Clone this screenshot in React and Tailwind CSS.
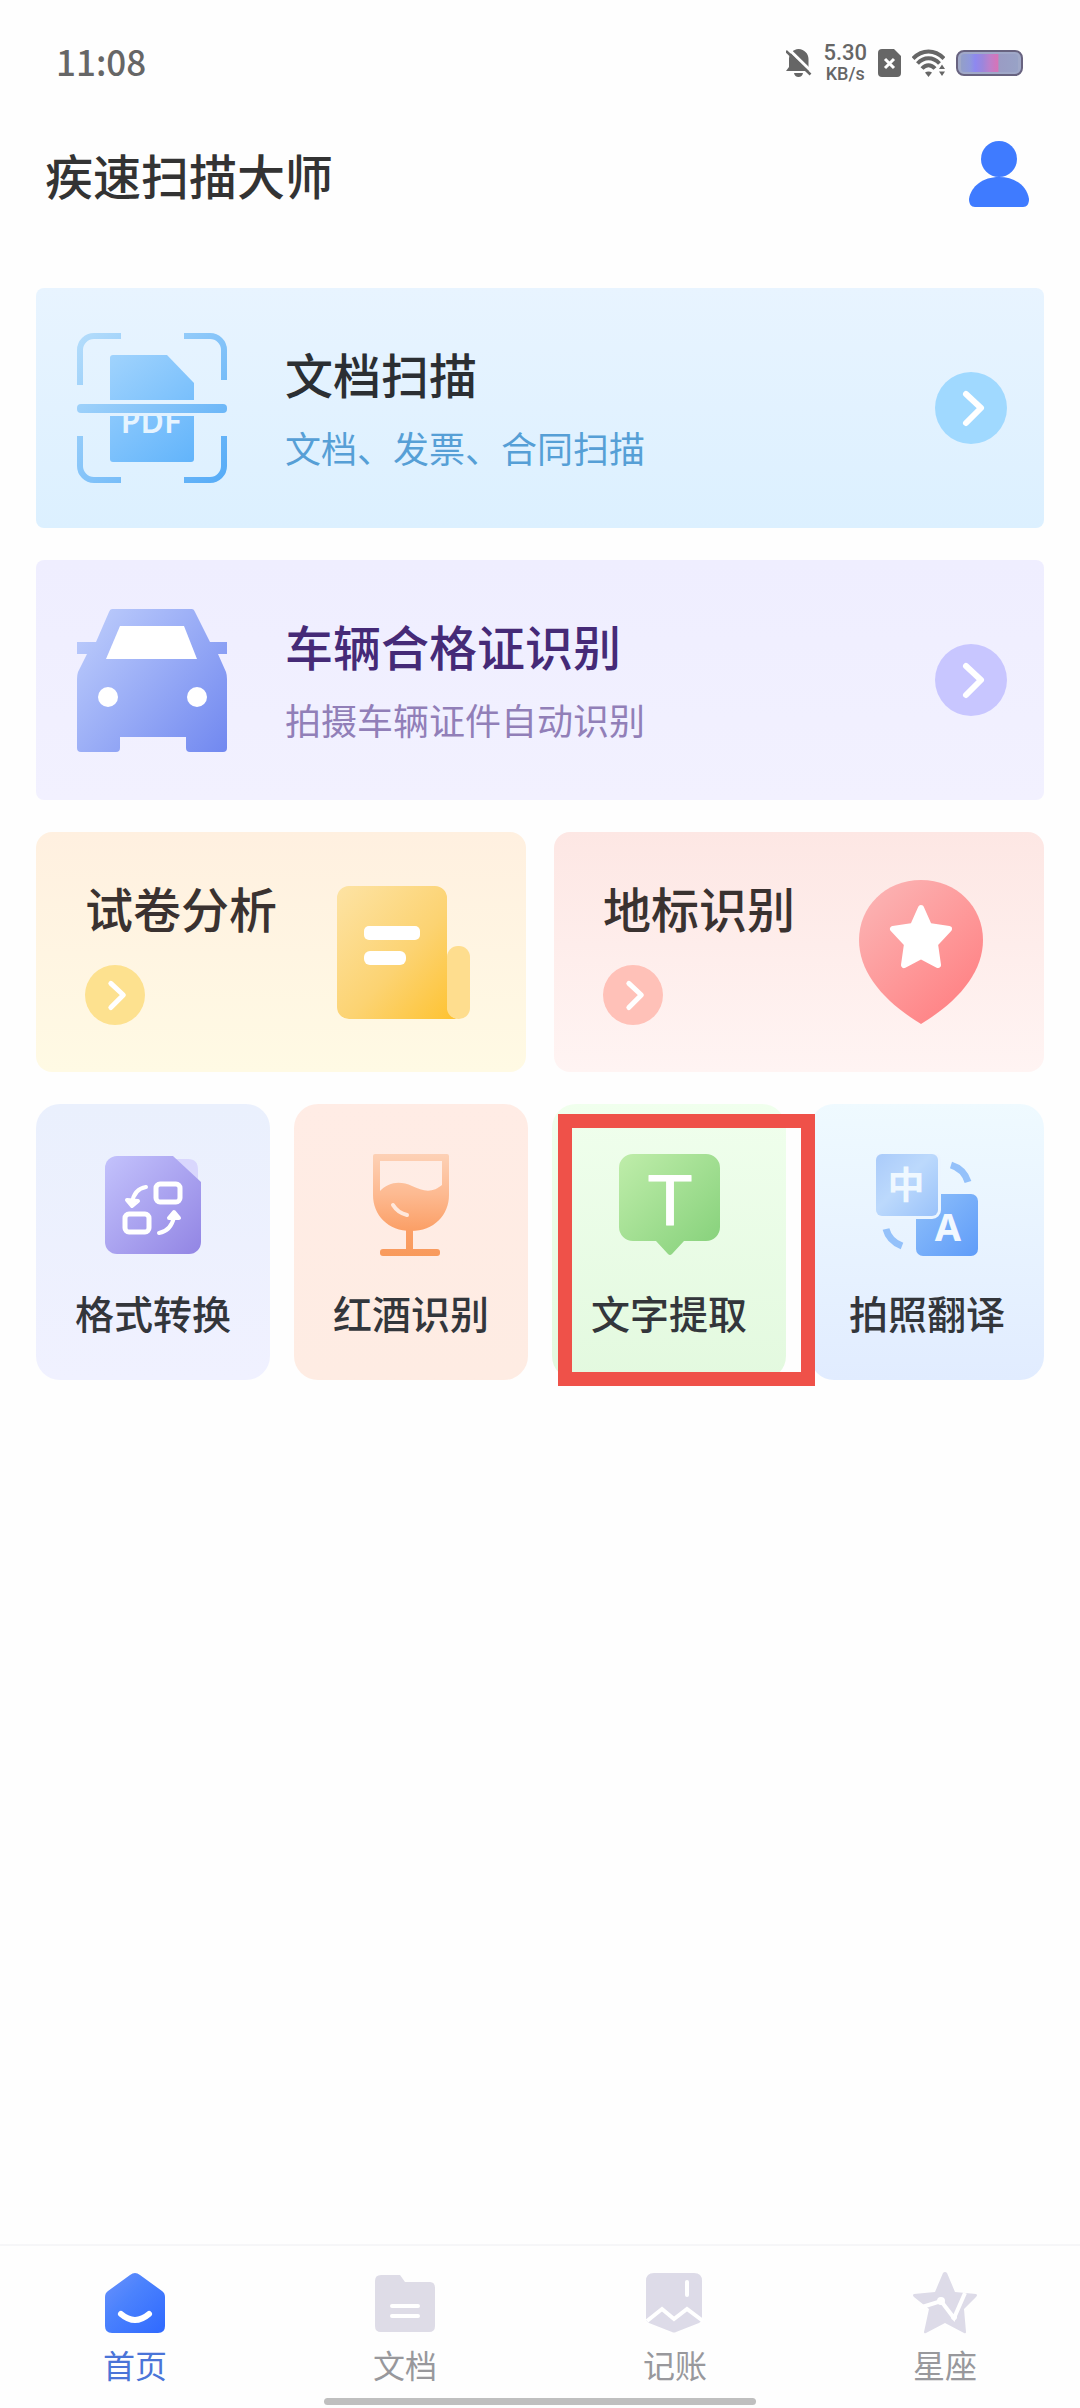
import { useState } from 'react';

const BellOffIcon = () => (
    <svg className="w-[26px] h-[28px]" viewBox="0 0 26 28" aria-hidden="true">
        <path d="M12.500 0c6 .5 10 4.500 10 10v8l2.500 4H0l3-4V9.500C3.500 4 7 .5 12.500 0Z" fill="#666" />
        <path d="M8 24h9c-.5 2.500-2 4-4.500 4S8.500 26.500 8 24Z" fill="#666" />
        <path d="M2 -.5 26 23" stroke="#fefefe" strokeWidth="3" />
        <path d="M0 2 24.500 25.500" stroke="#666" strokeWidth="2.500" />
    </svg>
);

const SimIcon = () => (
    <svg className="w-[23px] h-[28px]" viewBox="0 0 23 28" aria-hidden="true">
        <path d="M4 0h12l7 7v17a4 4 0 0 1-4 4H4a4 4 0 0 1-4-4V4a4 4 0 0 1 4-4Z" fill="#666" />
        <path d="m7 10 9 9m0-9-9 9" stroke="#fff" strokeWidth="3" />
    </svg>
);

const WifiIcon = () => (
    <svg className="w-[33px] h-[28px]" viewBox="0 0 33 28" fill="none" aria-hidden="true">
        <path d="M1 9.500C10 0 23 0 32 9.500" stroke="#666" strokeWidth="4" />
        <path d="M5.500 14.500c6.500-7 15.500-7 22 0" stroke="#666" strokeWidth="4" />
        <path d="M10 19.500c4-4.500 9-4.500 13 0" stroke="#666" strokeWidth="4" />
        <path d="M13 23.500c2-1.500 5-1.500 7 0L16.500 28Z" fill="#666" />
        <path d="M24.500 20 30 12l5.500 8v3L30 31l-5.500-8Z" fill="#fefefe" />
        <path d="m27 20 3-4.500 3 4.500ZM27 22.500l3 4.500 3-4.500Z" fill="#666" />
    </svg>
);

const BatteryIcon = () => (
    <svg className="w-[67px] h-[26px]" viewBox="0 0 67 26" aria-hidden="true">
        <defs>
            <linearGradient id="battery">
                <stop offset="0" stopColor="#939fc8" />
                <stop offset=".16" stopColor="#8f98dc" />
                <stop offset=".25" stopColor="#8e88f0" />
                <stop offset=".38" stopColor="#9c86dc" />
                <stop offset=".5" stopColor="#bb80cc" />
                <stop offset=".64" stopColor="#d674b8" />
                <stop offset=".67" stopColor="#9a9cc4" />
                <stop offset="1" stopColor="#98a2c6" />
            </linearGradient>
        </defs>
        <rect x="1" y="1" width="65" height="24" rx="7" fill="#a0a8c8" stroke="#686380" strokeWidth="2" />
        <rect x="5" y="4" width="57" height="18" rx="3" fill="url(#battery)" />
    </svg>
);

const UserIcon = () => (
    <svg className="w-[60px] h-[66px]" viewBox="0 0 60 66" fill="#3f7bff" aria-hidden="true">
        <circle cx="30" cy="18" r="18" />
        <path d="M30 36c16 0 28 9 30 22 0 5-2 8-6 8H6c-4 0-6-3-6-8C2 45 14 36 30 36Z" />
    </svg>
);

const PdfScanIcon = () => (
    <svg className="w-[150px] h-[150px]" viewBox="0 0 150 150" fill="none" aria-hidden="true">
        <defs>
            <linearGradient id="scan-frame" gradientUnits="userSpaceOnUse" x1="0" y1="0" x2="150" y2="150">
                <stop offset="0" stopColor="#b5ddfb" />
                <stop offset="1" stopColor="#55abf7" />
            </linearGradient>
            <linearGradient id="scan-doc" gradientUnits="userSpaceOnUse" x1="33" y1="22" x2="117" y2="129">
                <stop offset="0" stopColor="#a0d3fd" />
                <stop offset="1" stopColor="#62b4fb" />
            </linearGradient>
            <clipPath id="scan-lower">
                <rect x="33" y="83" width="84" height="46" />
            </clipPath>
        </defs>
        <path
            d="M44 3H17A14 14 0 0 0 3 17v35M107 3h26a14 14 0 0 1 14 14v30M3 103v30a14 14 0 0 0 14 14h27M147 103v30a14 14 0 0 1-14 14h-26"
            stroke="url(#scan-frame)"
            strokeWidth="6"
        />
        <path d="M36 22h54l27 28v17H33V25a3 3 0 0 1 3-3Z" fill="url(#scan-doc)" />
        <path d="M33 83h84v43a3 3 0 0 1-3 3H36a3 3 0 0 1-3-3Z" fill="url(#scan-doc)" />
        <text
            x="74"
            y="100"
            textAnchor="middle"
            fontSize="32"
            fontWeight="600"
            fill="#e6f4ff"
            clipPath="url(#scan-lower)"
            className="font-['Noto_Sans',sans-serif]"
        >
            PDF
        </text>
        <rect y="71" width="150" height="9" rx="4" fill="url(#scan-frame)" />
    </svg>
);

const CarIcon = () => (
    <svg className="w-[150px] h-[143px]" viewBox="0 0 150 143" aria-hidden="true">
        <defs>
            <linearGradient id="car" x1="0" y1=".2" x2="1" y2="1">
                <stop offset="0" stopColor="#b9c9fb" />
                <stop offset="1" stopColor="#7188f0" />
            </linearGradient>
        </defs>
        <path
            d="M35 0h80q2 0 3 3l15 30h17v12h-9l8 18q1 3 1 7v69q0 4-4 4h-33q-4 0-4-4v-11H43v11q0 4-4 4H4q-4 0-4-4V70q0-4 1-7l9-18H0V33h19L32 3q1-3 3-3Z"
            fill="url(#car)"
        />
        <path d="M43 17h64l13 33H29Z" fill="#fff" />
        <circle cx="31" cy="88" r="10" fill="#fff" />
        <circle cx="120" cy="88" r="10" fill="#fff" />
    </svg>
);

const PaperIcon = () => (
    <svg className="w-[133px] h-[133px]" viewBox="0 0 133 133" aria-hidden="true">
        <defs>
            <linearGradient id="paper" x1="0" y1="0" x2="1" y2="1">
                <stop offset="0" stopColor="#fde3a4" />
                <stop offset=".55" stopColor="#fcd372" />
                <stop offset="1" stopColor="#fec22f" />
            </linearGradient>
        </defs>
        <path d="M12 0h86a12 12 0 0 1 12 12v109q2 10 10 12H12a12 12 0 0 1-12-12V12A12 12 0 0 1 12 0Z" fill="url(#paper)" />
        <rect x="110" y="60" width="23" height="73" rx="11" fill="#fedd8e" />
        <rect x="27" y="40" width="56" height="14" rx="5" fill="#fff" />
        <rect x="27" y="65" width="42" height="14" rx="6" fill="#fff" />
    </svg>
);

const PinIcon = () => (
    <svg className="w-[124px] h-[144px]" viewBox="0 0 124 144" aria-hidden="true">
        <defs>
            <linearGradient id="pin" x1="0" y1="0" x2=".8" y2="1">
                <stop offset="0" stopColor="#fbb8b8" />
                <stop offset=".6" stopColor="#fe9697" />
                <stop offset="1" stopColor="#ff7f82" />
            </linearGradient>
        </defs>
        <path d="M62 0c36 0 62 27 62 60 0 32-24 61-62 84C24 121 0 92 0 60 0 27 26 0 62 0Z" fill="url(#pin)" />
        <path
            d="m62 28 8 18 20 3-14 15 3 21-17-9-17 9 3-21-14-15 20-3Z"
            fill="#fff"
            stroke="#fff"
            strokeWidth="6"
            strokeLinejoin="round"
        />
    </svg>
);

const ConvertIcon = () => (
    <svg className="w-[96px] h-[98px]" viewBox="0 0 96 98" fill="none" aria-hidden="true">
        <defs>
            <linearGradient id="convert" x1="0" y1="0" x2="1" y2="1">
                <stop offset="0" stopColor="#c3c2fc" />
                <stop offset="1" stopColor="#9285e4" />
            </linearGradient>
        </defs>
        <path d="M68 3h15q10 0 10 11v13H78Z" fill="#d9d7fd" />
        <path d="M12 0h56l28 26v60a12 12 0 0 1-12 12H12A12 12 0 0 1 0 86V12A12 12 0 0 1 12 0Z" fill="url(#convert)" />
        <g stroke="#fff" strokeWidth="5" strokeLinecap="round" strokeLinejoin="round">
            <rect x="51" y="28" width="24" height="18" rx="4" />
            <rect x="20" y="58" width="24" height="18" rx="4" />
            <path d="M41 31q-12 2-14 16M54 77q12-2 15-16" strokeWidth="4" />
            <path d="m22 44 5 6 6-5ZM64 62l5-6 5 6Z" fill="#fff" strokeWidth="4" />
        </g>
    </svg>
);

const WineIcon = () => (
    <svg className="w-[76px] h-[102px]" viewBox="0 0 76 102" fill="none" aria-hidden="true">
        <defs>
            <linearGradient id="wine" gradientUnits="userSpaceOnUse" x1="0" y1="0" x2="0" y2="102">
                <stop offset="0" stopColor="#fdd1b6" />
                <stop offset=".4" stopColor="#fdb990" />
                <stop offset=".75" stopColor="#fb9f66" />
                <stop offset="1" stopColor="#f89a5c" />
            </linearGradient>
        </defs>
        <path
            d="M2 0h72q2 0 2 2v39c0 20-15 36-38 36S0 61 0 41V2q0-2 2-2Zm5 7v32c0 17 12 31 31 31s31-14 31-31V7Z"
            fill="url(#wine)"
            fillRule="evenodd"
        />
        <path d="M6 38c10-11 22-11 33-6s20 8 31-2v13c0 17-14 31-32 31S6 60 6 43Z" fill="url(#wine)" />
        <path d="M20 51q5 8 14 10" stroke="#ffe8dc" strokeWidth="4" strokeLinecap="round" />
        <path d="M33 76h7v20h-7Z" fill="url(#wine)" />
        <rect x="7" y="95" width="60" height="7" rx="3" fill="url(#wine)" />
    </svg>
);

const TextIcon = () => (
    <svg className="w-[101px] h-[102px]" viewBox="0 0 101 102" aria-hidden="true">
        <defs>
            <linearGradient id="text" x1="0" y1="0" x2="1" y2="1">
                <stop offset="0" stopColor="#bfedaa" />
                <stop offset="1" stopColor="#84d079" />
            </linearGradient>
        </defs>
        <path
            d="M14 0h73a14 14 0 0 1 14 14v59a14 14 0 0 1-14 14H65L53 100q-2 2-4 0L37 87H14A14 14 0 0 1 0 73V14A14 14 0 0 1 14 0Z"
            fill="url(#text)"
        />
        <text
            x="51"
            y="71"
            textAnchor="middle"
            fontSize="68"
            fill="#fff"
            stroke="#fff"
            strokeWidth="1"
            strokeLinejoin="round"
            className="font-['DejaVu_Sans',sans-serif] font-normal"
        >
            T
        </text>
    </svg>
);

const TranslateIcon = () => (
    <svg className="w-[102px] h-[102px]" viewBox="0 0 102 102" fill="none" aria-hidden="true">
        <defs>
            <linearGradient id="tr-back" x1="0" y1="0" x2="1" y2="1">
                <stop offset="0" stopColor="#aacbfa" />
                <stop offset=".45" stopColor="#bcd9fc" />
                <stop offset="1" stopColor="#9ac2fa" />
            </linearGradient>
            <linearGradient id="tr-front" x1="0" y1="0" x2="1" y2="1">
                <stop offset="0" stopColor="#8fc0fa" />
                <stop offset="1" stopColor="#5f9cf9" />
            </linearGradient>
        </defs>
        <rect x="40" y="40" width="62" height="62" rx="7" fill="url(#tr-front)" />
        <rect x="-3" y="-3" width="68" height="68" rx="9" fill="#ebf5ff" />
        <rect width="62" height="62" rx="6" fill="url(#tr-back)" />
        <text x="30" y="45" textAnchor="middle" fontSize="37" fontWeight="700" fill="#eff8ff" className="font-['Noto_Sans_CJK_SC',sans-serif]">
            中
        </text>
        <text x="72" y="87" textAnchor="middle" fontSize="38" fontWeight="700" fill="#f1f8ff" className="font-['Noto_Sans',sans-serif]">
            A
        </text>
        <path d="M75 11q13 4 17 17M10 75q3 12 16 17" stroke="#94c1fa" strokeWidth="7" />
    </svg>
);

const HomeIcon = () => (
    <svg className="w-[60px] h-[60px]" viewBox="0 0 60 60" fill="none" aria-hidden="true">
        <defs>
            <linearGradient id="home" x1="0" y1="0" x2="1" y2="1">
                <stop offset="0" stopColor="#6b92fb" />
                <stop offset=".4" stopColor="#4b82fd" />
                <stop offset="1" stopColor="#2f69ff" />
            </linearGradient>
        </defs>
        <path d="M25 2q5-4 10 0l22 16q3 2 3 6v29q0 7-7 7H7q-7 0-7-7V24q0-4 3-6Z" fill="url(#home)" />
        <path d="M16 41q14 12 28 0" stroke="#fff" strokeWidth="6" strokeLinecap="round" />
    </svg>
);

const FolderIcon = () => (
    <svg className="w-[60px] h-[60px]" viewBox="0 0 60 60" fill="none" aria-hidden="true">
        <path d="M6 2h19l5 7h25q5 0 5 6v38q0 6-6 6H6q-6 0-6-6V8q0-6 6-6Z" fill="#dedce7" />
        <path d="M17 33h26M17 43h26" stroke="#fff" strokeWidth="4" strokeLinecap="round" />
    </svg>
);

const LedgerIcon = () => (
    <svg className="w-[60px] h-[60px]" viewBox="0 0 60 60" fill="none" aria-hidden="true">
        <path d="M9 0h40q8 0 8 8v38q0 2-3 4L31 59q-2 1-4 0L4 50q-3-2-3-4V8q0-8 8-8Z" fill="#dddbe8" />
        <path d="M2 48 17 36l12 10 13-10 16 12" stroke="#fff" strokeWidth="4" />
        <path d="M42 9v13" stroke="#fff" strokeWidth="4" strokeLinecap="round" />
    </svg>
);

const StarIcon = () => (
    <svg className="w-[64px] h-[62px]" viewBox="0 0 64 62" fill="none" aria-hidden="true">
        <path d="M30 1q2-2 4 0l8 19 21 2q2 1 0 3L51 37l2 23q0 2-2 1L32 51 13 61q-2 1-2-1l5-23L1 25q-2-2 0-3l21-2Z" fill="#dddbe8" />
        <path d="m6 36 22-7 13 17 11-25" stroke="#fff" strokeWidth="4" />
        <circle cx="28" cy="29" r="4" fill="#fff" />
        <circle cx="41" cy="45" r="3" fill="#fff" />
    </svg>
);

const ArrowBadge = ({ className }) => (
    <svg className={className} viewBox="0 0 72 72" fill="none" aria-hidden="true">
        <circle cx="36" cy="36" r="36" fill="currentColor" />
        <path d="m31 22 15 14-15 15" stroke="#fff" strokeWidth="6" strokeLinecap="round" strokeLinejoin="round" />
    </svg>
);

const wideCards = [
    {
        title: '文档扫描',
        desc: '文档、发票、合同扫描',
        icon: PdfScanIcon,
        card: 'from-[#e8f4ff] to-[#dcf0ff]',
        titleColor: 'text-[#2b2f33]',
        descColor: 'text-[#569fd6]',
        arrow: 'text-[#a0d9ff]',
    },
    {
        title: '车辆合格证识别',
        desc: '拍摄车辆证件自动识别',
        icon: CarIcon,
        card: 'from-[#efeeff] to-[#f2f1ff]',
        titleColor: 'text-[#452a77]',
        descColor: 'text-[#917fb8]',
        arrow: 'text-[#c8c6ff]',
    },
];

const halfCards = [
    { title: '试卷分析', icon: PaperIcon, card: 'from-[#fff0e0] to-[#fffae4]', arrow: 'text-[#fde18f]' },
    { title: '地标识别', icon: PinIcon, card: 'from-[#fde7e4] to-[#fff4f3]', arrow: 'text-[#ffc1b8]' },
];

const toolCards = [
    { title: '格式转换', icon: ConvertIcon, card: 'from-[#eaf0fd] to-[#f0f1ff]' },
    { title: '红酒识别', icon: WineIcon, card: 'from-[#ffece5] to-[#feece3]' },
    { title: '文字提取', icon: TextIcon, card: 'from-[#f0ffed] to-[#e3f9df]', highlighted: true },
    { title: '拍照翻译', icon: TranslateIcon, card: 'from-[#effaff] to-[#e1ecff]' },
];

const tabs = [
    { name: '首页', icon: HomeIcon },
    { name: '文档', icon: FolderIcon },
    { name: '记账', icon: LedgerIcon },
    { name: '星座', icon: StarIcon },
];

const StatusBar = () => (
    <div className="h-[126px] pl-14 pr-[57px] flex items-center justify-between text-[#666]">
        <span className="mb-1 text-[35px] leading-10 font-medium">11:08</span>
        <div className="flex items-center gap-[11px]">
            <BellOffIcon />
            <div className="flex flex-col items-center font-medium font-['Roboto',sans-serif]">
                <span className="text-[22px] leading-[22px]">5.30</span>
                <span className="text-[18px] leading-5">KB/s</span>
            </div>
            <SimIcon />
            <WifiIcon />
            <BatteryIcon />
        </div>
    </div>
);

const TabBar = () => {
    const [activeTab, setActiveTab] = useState('首页');

    return (
        <nav className="border-t-2 border-[#f6f6f8] flex flex-col items-center pt-[26px] pb-[3px]">
            <div className="w-full grid grid-cols-4">
                {tabs.map((tab) => {
                    const Icon = tab.icon;
                    return (
                        <a
                            key={tab.name}
                            href="#"
                            onClick={() => setActiveTab(tab.name)}
                            className={`flex flex-col items-center text-[32px] leading-10 ${activeTab === tab.name ? 'text-[#4a74d8]' : 'text-[#98989c]'}`}
                        >
                            <span className="h-[62px] mb-2.5 flex items-center">
                                <Icon />
                            </span>
                            {tab.name}
                        </a>
                    );
                })}
            </div>
            <div className="w-2/5 h-[7px] mt-3.5 rounded-full bg-[#bfbfbf]" />
        </nav>
    );
};

const App = () => {
    return (
        <div className="min-h-screen bg-[#fefefe] flex flex-col font-['Noto_Sans_CJK_SC',sans-serif]" lang="zh-CN">
            <StatusBar />

            <header className="h-24 pl-[45px] pr-[51px] flex items-center justify-between">
                <h1 className="text-[48px] leading-[72px] font-medium text-[#333]">疾速扫描大师</h1>
                <button aria-label="我的">
                    <UserIcon />
                </button>
            </header>

            <main className="flex-1 px-9 pt-[66px] flex flex-col gap-8">
                {wideCards.map((item) => {
                    const Icon = item.icon;
                    return (
                        <button
                            key={item.title}
                            className={`h-60 pl-[41px] pr-[37px] rounded-lg bg-gradient-to-b flex items-center text-left ${item.card}`}
                        >
                            <Icon />
                            <span className="flex-1 ml-[58px] pt-1 flex flex-col leading-[74px]">
                                <span className={`text-[48px] font-medium ${item.titleColor}`}>{item.title}</span>
                                <span className={`text-[36px] ${item.descColor}`}>{item.desc}</span>
                            </span>
                            <ArrowBadge className={`w-[72px] h-[72px] ${item.arrow}`} />
                        </button>
                    );
                })}

                <div className="grid grid-cols-2 gap-7">
                    {halfCards.map((item) => {
                        const Icon = item.icon;
                        return (
                            <button
                                key={item.title}
                                className={`h-60 pl-[49px] pr-14 rounded-2xl bg-gradient-to-b flex items-center justify-between text-left ${item.card}`}
                            >
                                <span className="flex flex-col gap-[30px]">
                                    <span className="text-[48px] leading-14 font-medium text-[#3a3230]">{item.title}</span>
                                    <ArrowBadge className={`w-[60px] h-[60px] ${item.arrow}`} />
                                </span>
                                <span className="w-[134px] flex justify-center">
                                    <Icon />
                                </span>
                            </button>
                        );
                    })}
                </div>

                <div className="grid grid-cols-4 gap-6">
                    {toolCards.map((item) => {
                        const Icon = item.icon;
                        return (
                            <button
                                key={item.title}
                                className={`relative pt-[50px] pb-[38px] rounded-3xl bg-gradient-to-b flex flex-col items-center ${item.card}`}
                            >
                                <span className="h-[102px] mb-[26px] flex items-center">
                                    <Icon />
                                </span>
                                <span className="text-[39px] leading-[60px] font-medium text-[#33363b]">{item.title}</span>
                                {item.highlighted && (
                                    <span className="absolute z-10 left-1.5 -right-[29px] top-2.5 -bottom-1.5 border-14 border-[#ef5149]" />
                                )}
                            </button>
                        );
                    })}
                </div>
            </main>

            <TabBar />
        </div>
    );
};

export default App;
